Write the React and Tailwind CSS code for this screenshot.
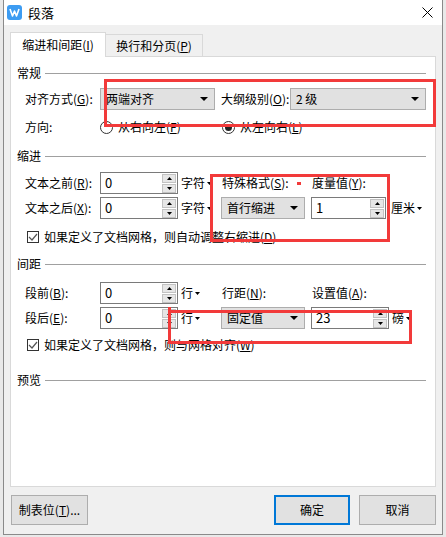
import React from "react";

// small black triangle used by dropdowns
const Tri = ({ w = 8, h = 4 }) => (
  <svg width={w} height={h} viewBox={`0 0 ${w} ${h}`}>
    <path d={`M0 0H${w}L${w / 2} ${h}Z`} fill="#000" />
  </svg>
);

const Select = ({ w, value }) => (
  <div className={`${w} h-[22px] border border-[#adadad] bg-[#e1e1e1] flex items-center justify-between pl-[5px] pr-[6px]`}>
    <span>{value}</span>
    <Tri w={8} h={4} />
  </div>
);

const Spin = ({ w, value }) => (
  <div className={`${w} h-[22px] border border-[#7a7a7a] bg-white flex items-center justify-between pl-[4px] pr-[1px]`}>
    <span className="text-[13px]">{value}</span>
    <div className="flex flex-col gap-[1px]">
      <div className="w-[14px] h-[9px] bg-[#e6e6e6] border border-[#c2c2c2] flex items-center justify-center">
        <svg width="5" height="3" viewBox="0 0 5 3">
          <path d="M0 3H5L2.5 0Z" fill="#000" />
        </svg>
      </div>
      <div className="w-[14px] h-[9px] bg-[#e6e6e6] border border-[#c2c2c2] flex items-center justify-center">
        <Tri w={5} h={3} />
      </div>
    </div>
  </div>
);

const Unit = ({ text, w = "w-[43px]", pl = "pl-[3px]" }) => (
  <div className={`${w} ${pl} flex items-center gap-[2px]`}>
    <span>{text}</span>
    <Tri w={5} h={3} />
  </div>
);

const Group = ({ title, className }) => (
  <div className={`flex items-center h-[16px] pl-[6px] pr-[9px] ${className}`}>
    <span>{title}</span>
    <div className="flex-1 h-px bg-[#a0a0a0] ml-[4px]" />
  </div>
);

const Check = ({ children, className }) => (
  <div className={`flex items-center h-[16px] pl-[16px] ${className}`}>
    <div className="w-[12px] h-[12px] border border-[#333] bg-white flex items-center justify-center">
      <svg width="10" height="10" viewBox="0 0 10 10">
        <path d="M1 5L4 8L9 2" fill="none" stroke="#555" strokeWidth="1.2" />
      </svg>
    </div>
    <span className="ml-[5px]">{children}</span>
  </div>
);

const Radio = ({ checked, children }) => (
  <div className="flex items-center">
    <div className="w-[13px] h-[13px] rounded-full border border-[#333] bg-white flex items-center justify-center">
      {checked && <div className="w-[7px] h-[7px] rounded-full bg-[#222]" />}
    </div>
    <span className="ml-[5px]">{children}</span>
  </div>
);

const App = () => {
  return (
    <div className="relative w-[446px] h-[537px] overflow-hidden bg-[#e9e9e9] text-[12px] leading-[16px] text-black font-['Noto_Sans_CJK_SC',sans-serif]">
      <div className="ml-[3px] w-[440px] h-[535px] border-x border-b border-[#8a8a8a] bg-[#f0f0f0] flex flex-col">
        {/* title bar */}
        <div className="h-[25px] bg-white flex items-center pl-[3px] pr-[9px]">
          <svg width="15" height="15" viewBox="0 0 15 15">
            <rect width="15" height="15" rx="3" fill="#3d9cf2" />
            <path d="M3 4L5.5 11L7.5 6L9.5 11L12 4" fill="none" stroke="#fff" strokeWidth="1.6" strokeLinejoin="round" />
          </svg>
          <span className="ml-[6px] text-[13px]">段落</span>
          <div className="flex-1" />
          <svg width="11" height="11" viewBox="0 0 11 11">
            <path d="M0.5 0.5L10.5 10.5M10.5 0.5L0.5 10.5" stroke="#000" strokeWidth="1" />
          </svg>
        </div>

        <div className="px-[6px] flex flex-col">
          {/* tabs */}
          <div className="flex items-end h-[24px] mt-[7px]">
            <div className="relative z-10 w-[96px] h-[25px] -mb-px bg-white border-l border-t border-r border-[#d9d9d9] flex items-center justify-center">
              缩进和间距(<u>I</u>)
            </div>
            <div className="w-[97px] h-[22px] border-t border-r border-[#d9d9d9] bg-[#f0f0f0] flex items-center justify-center">
              换行和分页(<u>P</u>)
            </div>
          </div>

          {/* panel */}
          <div className="h-[431px] border border-[#d9d9d9] bg-white flex flex-col">
            <Group title="常规" className="mt-[8px]" />
            <div className="flex items-center h-[22px] mt-[7px] pl-[14px]">
              <div className="w-[75px]">对齐方式(<u>G</u>):</div>
              <Select w="w-[115px]" value="两端对齐" />
              <div className="w-[69px] ml-[6px]">大纲级别(<u>O</u>):</div>
              <Select w="w-[136px]" value="2 级" />
            </div>
            <div className="flex items-center h-[16px] mt-[9px] pl-[14px]">
              <div className="w-[75px]">方向:</div>
              <div className="w-[122px]">
                <Radio>从右向左(<u>F</u>)</Radio>
              </div>
              <Radio checked>从左向右(<u>L</u>)</Radio>
            </div>

            <Group title="缩进" className="mt-[13px]" />
            <div className="flex items-center h-[22px] mt-[8px] pl-[14px]">
              <div className="w-[75px]">文本之前(<u>R</u>):</div>
              <Spin w="w-[78px]" value="0" />
              <Unit text="字符" />
              <div className="w-[90px] pl-[1px]">特殊格式(<u>S</u>):</div>
              <div className="pl-[1px]">度量值(<u>Y</u>):</div>
            </div>
            <div className="flex items-center h-[22px] mt-[3px] pl-[14px]">
              <div className="w-[75px]">文本之后(<u>X</u>):</div>
              <Spin w="w-[78px]" value="0" />
              <Unit text="字符" />
              <div className="w-[90px]">
                <Select w="w-[84px]" value="首行缩进" />
              </div>
              <Spin w="w-[75px]" value="1" />
              <Unit text="厘米" w="w-auto" pl="pl-[5px]" />
            </div>
            <Check className="mt-[10px]">如果定义了文档网格，则自动调整右缩进(<u>D</u>)</Check>

            <Group title="间距" className="mt-[11px]" />
            <div className="flex items-center h-[22px] mt-[10px] pl-[14px]">
              <div className="w-[75px]">段前(<u>B</u>):</div>
              <Spin w="w-[78px]" value="0" />
              <Unit text="行" />
              <div className="w-[90px] pl-[1px]">行距(<u>N</u>):</div>
              <div className="pl-[1px]">设置值(<u>A</u>):</div>
            </div>
            <div className="flex items-center h-[22px] mt-[3px] pl-[14px]">
              <div className="w-[75px]">段后(<u>E</u>):</div>
              <Spin w="w-[78px]" value="0" />
              <Unit text="行" />
              <div className="w-[90px]">
                <Select w="w-[84px]" value="固定值" />
              </div>
              <Spin w="w-[78px]" value="23" />
              <Unit text="磅" w="w-auto" pl="pl-[3px]" />
            </div>
            <Check className="mt-[8px]">如果定义了文档网格，则与网格对齐(<u>W</u>)</Check>

            <Group title="预览" className="mt-[19px]" />
          </div>

          {/* buttons */}
          <div className="flex items-center mt-[8px] pl-[1px]">
            <button className="w-[77px] h-[30px] border border-[#adadad] bg-[#e1e1e1]">制表位(<u>T</u>)...</button>
            <div className="flex-1" />
            <button className="w-[76px] h-[30px] border-2 border-[#0078d7] bg-[#e1e1e1]">确定</button>
            <button className="w-[77px] h-[30px] ml-[9px] border border-[#adadad] bg-[#e1e1e1]">取消</button>
          </div>
        </div>
      </div>

      {/* red annotation marks */}
      <div className="absolute left-[104px] top-[79px] w-[332px] h-[48px] border-[3px] border-[#f23a3a]" />
      <div className="absolute left-[210px] top-[174px] w-[180px] h-[68px] border-[3px] border-[#f23a3a]" />
      <div className="absolute left-[297px] top-[182px] w-[4px] h-[3px] bg-[#f23a3a]" />
      <div className="absolute left-[168px] top-[310px] w-[244px] h-[34px] border-[3px] border-[#f23a3a]" />
      <div className="absolute left-[168px] top-[307px] w-[3px] h-[4px] bg-[#f23a3a]" />
    </div>
  );
};

export default App;
